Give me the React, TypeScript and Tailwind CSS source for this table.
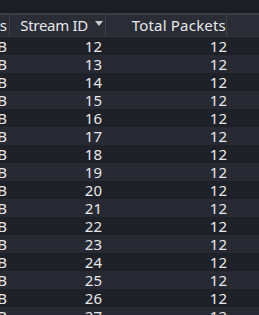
import React from "react";

const rows = Array.from({ length: 16 }, (_, i) => ({ id: 12 + i, tail: "1.2 KB", packets: 12 }));

const App = () => {
  return (
    <div
      className="w-[259px] h-[315px] overflow-hidden bg-[#1c1e25] text-[#e8e8ea]"
      style={{ fontFamily: '"Noto Sans", "Open Sans", sans-serif' }}
    >
      {/* top strip */}
      <div className="h-[13px] bg-[#1c1e25]" />
      <div className="h-[2px] bg-[#3a3d48]" />

      {/* header */}
      <div className="flex h-[22px] bg-[#2a2c36] border-b border-[#33363f] text-[15px] leading-[21px]">
        <div className="w-[10px] shrink-0 overflow-hidden flex justify-end border-r border-[#3d404a] pr-[2px]">
          <span className="whitespace-nowrap">Bytes</span>
        </div>
        <div className="w-[96px] shrink-0 flex items-center justify-end gap-[7px] pr-[2px] border-r border-[#3d404a]">
          <span className="tracking-[-0.3px]">Stream ID</span>
          <svg width="8" height="5" viewBox="0 0 8 5" className="mb-[4px]">
            <path d="M0 0h8L4 5z" fill="#c8c9ce" />
          </svg>
        </div>
        <div className="w-[121px] shrink-0 flex justify-end pr-0 border-r border-[#3d404a]">
          <span className="tracking-[0.2px]">Total Packets</span>
        </div>
        <div className="flex-1" />
      </div>

      {/* rows */}
      {rows.map((r, i) => (
        <div
          key={r.id}
          className={`flex h-[18px] text-[15px] leading-[18px] ${i % 2 === 0 ? "bg-[#1f2129]" : "bg-[#272933]"}`}
        >
          <div className="w-[10px] shrink-0 overflow-hidden flex justify-end pr-[3px]">
            <span className="whitespace-nowrap">{r.tail}</span>
          </div>
          <div className="w-[96px] shrink-0 text-right pr-[4px]">{r.id}</div>
          <div className="w-[121px] shrink-0 text-right pr-0">{r.packets}</div>
          <div className="flex-1" />
        </div>
      ))}
    </div>
  );
};

export default App;
